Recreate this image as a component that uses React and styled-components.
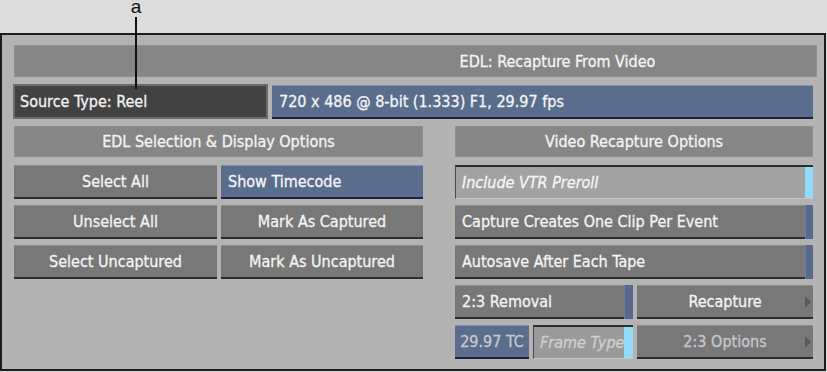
import React from 'react';
import styled, { createGlobalStyle } from 'styled-components';

const Global = createGlobalStyle`
  html, body {
    margin: 0;
    padding: 0;
    background: #dcdcdc;
  }
  body {
    font-family: "DejaVu Sans Condensed", "DejaVu Sans", sans-serif;
  }
`;

const Page = styled.div`
  position: relative;
  width: 827px;
  height: 372px;
  padding-top: 33px;
  box-sizing: border-box;
  overflow: hidden;
`;

const Callout = styled.div`
  position: absolute;
  left: 126px;
  top: 0;
  width: 20px;
  display: flex;
  flex-direction: column;
  align-items: center;
  z-index: 2;
`;

const CalloutLetter = styled.span`
  font-family: "Liberation Sans", Arial, sans-serif;
  font-size: 19px;
  line-height: 12px;
  padding-top: 1px;
  color: #111;
`;

const CalloutLine = styled.div`
  width: 2px;
  height: 72px;
  margin-top: 4px;
  background: #111;
`;

const Frame = styled.div`
  width: 826px;
  height: 338px;
  box-sizing: border-box;
  border: 2px solid #1c1c1c;
  background: #b3b3b3;
  padding: 10px 7px 0 11px;
  display: flex;
  flex-direction: column;
  -webkit-text-stroke: 0.3px currentColor;
`;

const TitleBar = styled.div`
  height: 32px;
  margin-left: 1px;
  background: #868686;
  box-shadow: inset 0 0 0 1px #8e8e8e;
  display: flex;
  align-items: center;
  padding-left: 284px;
  justify-content: center;
  color: #f4f4f4;
  font-size: 16px;
`;

const InfoRow = styled.div`
  display: flex;
  gap: 4px;
  margin-top: 7px;
  width: 800px;
`;

const SourceBox = styled.div`
  width: 255px;
  height: 35px;
  box-sizing: border-box;
  background: #424242;
  border: 2px solid #6c6c6c;
  color: #f2f2f2;
  font-size: 16px;
  display: flex;
  align-items: center;
  padding-left: 5px;
`;

const FormatBox = styled.div`
  flex: 1;
  height: 34px;
  margin-top: 1px;
  box-sizing: border-box;
  background: #5a6d8c;
  border-top: 1px solid #8594ae;
  border-bottom: 2px solid #1f2142;
  color: #f4f4f4;
  font-size: 16px;
  display: flex;
  align-items: center;
  padding-left: 7px;
`;

const Columns = styled.div`
  display: flex;
  gap: 32px;
  margin-top: 7px;
  width: 802px;
  padding-left: 1px;
`;

const Column = styled.div`
  width: ${p => p.$w}px;
  display: flex;
  flex-direction: column;
  gap: 8px;
`;

const SectionHeader = styled.div`
  height: 31px;
  background: #868686;
  box-shadow: inset 0 0 0 1px #8e8e8e;
  color: #f4f4f4;
  font-size: 16px;
  display: flex;
  align-items: center;
  justify-content: center;
`;

const ButtonGrid = styled.div`
  display: grid;
  grid-template-columns: ${p => p.$cols};
  grid-auto-rows: 34px;
  gap: 6px 4px;
`;

const Button = styled.div`
  position: relative;
  box-sizing: border-box;
  grid-column: ${p => p.$span || 'auto'};
  background: ${p => (p.$blue ? '#5a6d8c' : '#787878')};
  border-top: 1px solid ${p => (p.$blue ? '#7f8fab' : '#8a8a8a')};
  border-bottom: 2px solid ${p => (p.$blue ? '#1f2142' : '#2c2c2c')};
  color: ${p => (p.$dim ? '#c6c9d0' : '#f4f4f4')};
  font-size: 16px;
  display: flex;
  align-items: center;
  justify-content: ${p => (p.$left ? 'flex-start' : 'center')};
  padding: 0 0 0 ${p => (p.$left ? 7 : 0)}px;
  white-space: nowrap;
`;

const Field = styled.div`
  position: relative;
  box-sizing: border-box;
  grid-column: ${p => p.$span || 'auto'};
  background: ${p => (p.$dim ? '#9a9a9a' : '#a2a2a2')};
  border-top: 2px solid #2e2e2e;
  border-left: 1px solid #4a4a4a;
  border-bottom: 1px solid #c4c4c4;
  color: ${p => (p.$dim ? '#cfcfcf' : '#f6f6f6')};
  font-size: 16px;
  font-style: italic;
  display: flex;
  align-items: center;
  padding-left: 6px;
  white-space: nowrap;
`;

const Indicator = styled.span`
  position: absolute;
  right: 0;
  top: ${p => (p.$inset ? 0 : -1)}px;
  bottom: ${p => (p.$inset ? 0 : -2)}px;
  width: ${p => p.$w || 8}px;
  background: ${p => (p.$on ? '#90dcfa' : '#56698a')};
  box-shadow: ${p => (p.$on ? 'none' : 'inset 1px 0 0 #6d7fa0')};
`;

const Arrow = styled.span`
  position: absolute;
  right: 2px;
  top: 50%;
  margin-top: -6px;
  width: 0;
  height: 0;
  border-top: 6px solid transparent;
  border-bottom: 6px solid transparent;
  border-left: 6px solid #585858;
`;

export default function App() {
  return (
    <Page>
      <Global />
      <Callout>
        <CalloutLetter>a</CalloutLetter>
        <CalloutLine />
      </Callout>
      <Frame>
        <TitleBar>EDL: Recapture From Video</TitleBar>
        <InfoRow>
          <SourceBox>Source Type: Reel</SourceBox>
          <FormatBox>720 x 486 @ 8-bit (1.333) F1, 29.97 fps</FormatBox>
        </InfoRow>
        <Columns>
          <Column $w={409}>
            <SectionHeader>EDL Selection &amp; Display Options</SectionHeader>
            <ButtonGrid $cols="203px 202px">
              <Button>Select All</Button>
              <Button $blue $left>Show Timecode</Button>
              <Button>Unselect All</Button>
              <Button>Mark As Captured</Button>
              <Button>Select Uncaptured</Button>
              <Button>Mark As Uncaptured</Button>
            </ButtonGrid>
          </Column>
          <Column $w={358}>
            <SectionHeader>Video Recapture Options</SectionHeader>
            <ButtonGrid $cols="74px 100px 176px">
              <Field $span="1 / 4">
                Include VTR Preroll
                <Indicator $on $inset />
              </Field>
              <Button $span="1 / 4" $left>
                Capture Creates One Clip Per Event
                <Indicator />
              </Button>
              <Button $span="1 / 4" $left>
                Autosave After Each Tape
                <Indicator />
              </Button>
              <Button $span="1 / 3" $left>
                2:3 Removal
                <Indicator $w={9} />
              </Button>
              <Button>
                Recapture
                <Arrow />
              </Button>
              <Button $blue $dim>29.97 TC</Button>
              <Field $dim>
                Frame Type
                <Indicator $on $inset $w={9} />
              </Field>
              <Button $dim>
                2:3 Options
                <Arrow />
              </Button>
            </ButtonGrid>
          </Column>
        </Columns>
      </Frame>
    </Page>
  );
}
